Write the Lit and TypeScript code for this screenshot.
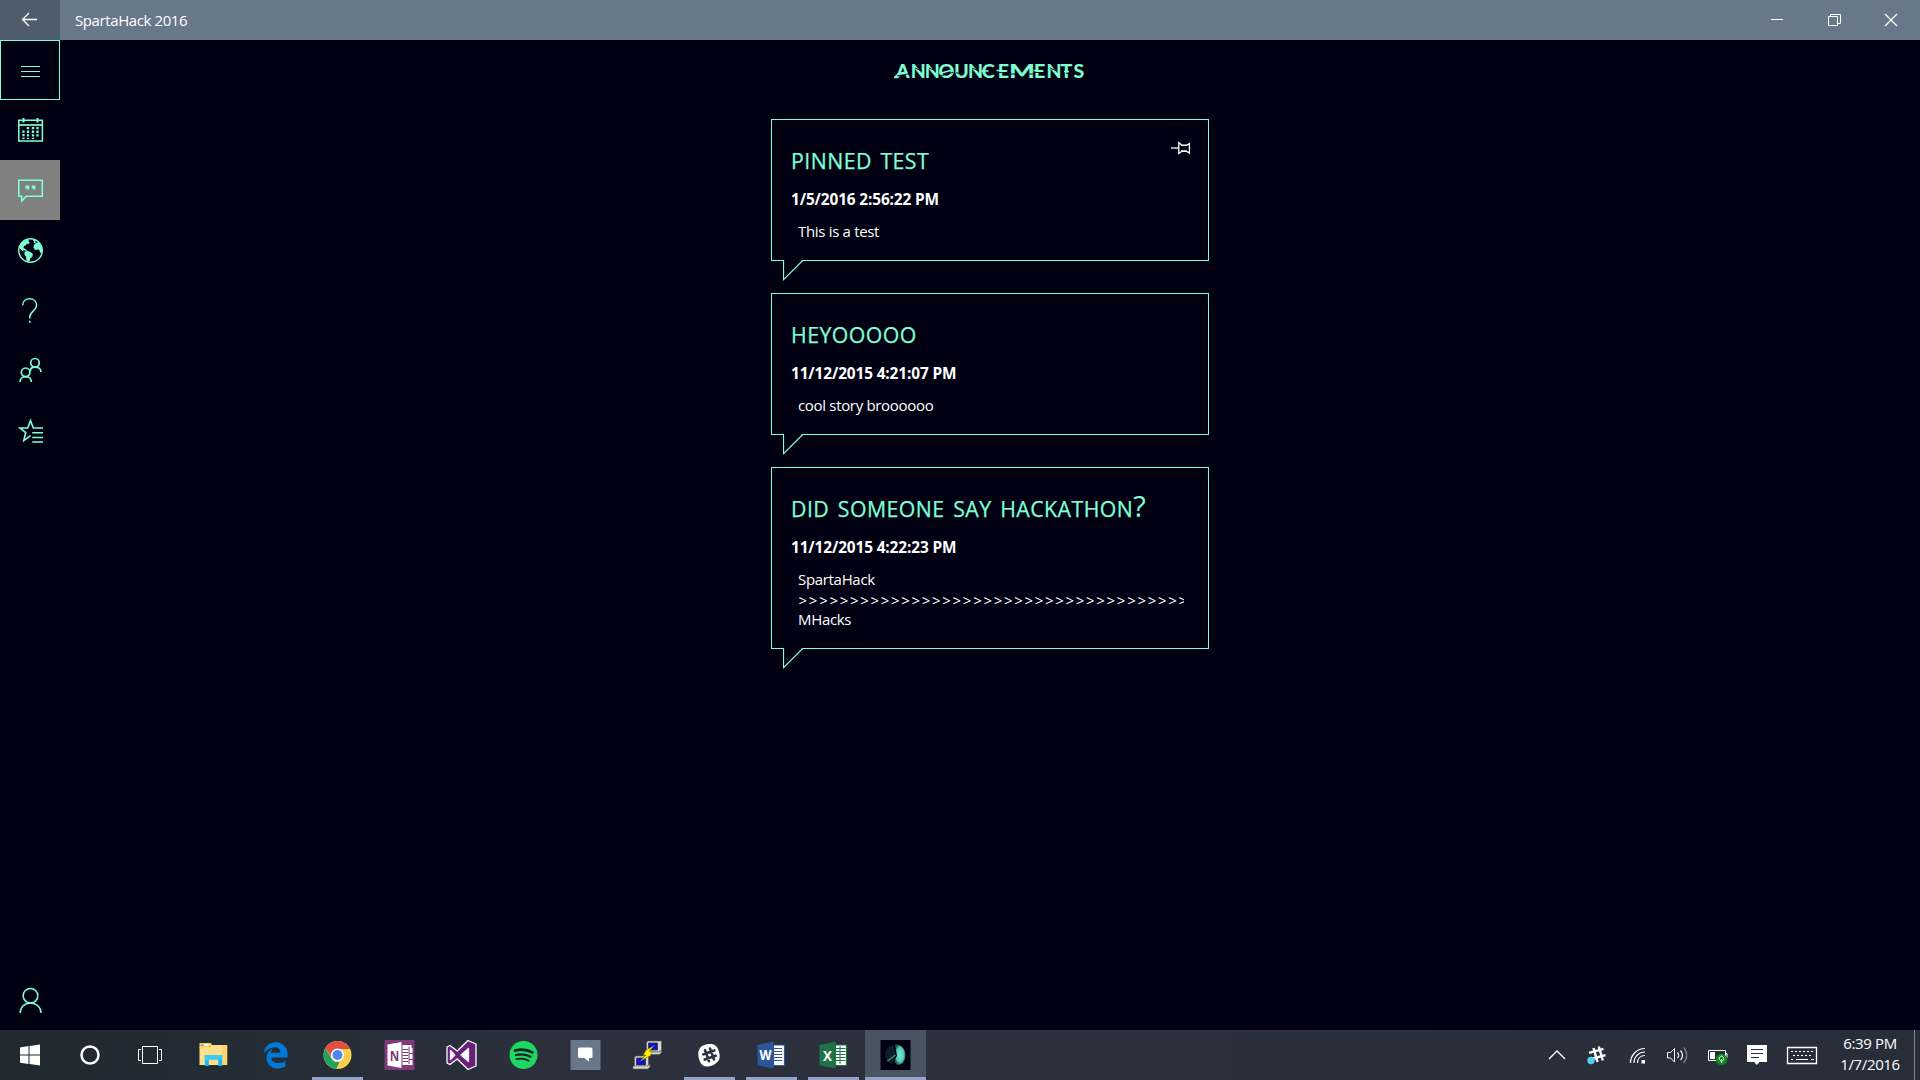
import { LitElement, html, css, svg, nothing } from "lit";
import { customElement, property } from "lit/decorators.js";
import { classMap } from "lit/directives/class-map.js";

const navIcons: Record<string, unknown> = {
  menu: svg`<path d="M21 26.5h19M21 31.5h19M21 36.5h19" stroke-width="1"/>`,
  calendar: svg`<path d="M18.8 20.2h23.6v20.9H18.8z" stroke-width="1.5"/><path d="M19 25h23.5" stroke-width="1.7"/>
    <path d="M23.5 18v4.6M37.5 18v4.6" stroke-width="2"/>
    <path d="M28 27v12M33 27v12M37.5 27v9.5M23.5 30.4v8.6" stroke-width="2.3" stroke-dasharray="2.3 1.3"/>`,
  chat: svg`<path d="M18.8 20.2h23.5v16H26.2L21.8 41v-4.8h-3z" stroke-width="1.6"/>
    <path class="solid" d="M25.4 25.4h3.8v3.2L27.4 31v-2.4h-2zM31.7 25.4h3.8v3.2L33.7 31v-2.4h-2z"/>`,
  globe: svg`<circle cx="30.5" cy="30.5" r="11.8" stroke-width="1.4"/>
    <path class="solid" d="M20 25.5c1-2.4 3.2-4.6 5.8-5.8l3.4.6-.8 1.5 1.4.4-.8 1.5-2.4.3-1 1.4-1.5.7-.6 1.9 2.8 1.4 1 1.8-1.8-.7-2.6-.2-1.6-1.4-2.3-1.4zM24.6 31.6l3.3-.5 3 1.2 2 1.6-.5 2.9-1.8 1.3-.8 2.3-1.8 1.6-1.4-1-.6-4.2-1.6-2.2zM33.8 19.6l2.8 1.3-2 1.2 1.6.6 2-.4c2.4 2.1 4 4.9 4 8.2l-.7 2.6-1.5-.3-.5-2.5-1.6-.7-2.7.4-1.8-2.2.6-3 1.8-1.6-2.3-.5.6-1.2-1.2-1z"/>
    <path d="M20 28l3.4 3.3" stroke-width="1"/>`,
  help: svg`<path d="M22.7 25.2c0-4 3-6.500 7-6.500s6.900 2.600 6.900 6.400c0 5.600-6.800 6.400-6.800 11.800v1.600" stroke-width="1.500"/><path d="M29.800 40.800v2" stroke-width="1.700"/>`,
  people: svg`<g stroke-width="1.7"><circle cx="35" cy="22.800" r="4.300"/><path d="M30.300 31c0-2.400 2-3.800 4.700-3.800 3.400 0 6 1.900 6 4.800"/><circle cx="25.600" cy="32.300" r="4.300"/><path d="M20 42c0-3.200 2.500-5.300 5.700-5.300S31.400 38.800 31.400 42"/></g>`,
  star: svg`<path d="M43 28h-9.700L30.500 20.600 27.700 28h-7.700l5.700 4.500-1.900 8.200 6.800-5" stroke-width="1.600"/><path d="M32.200 32.700H43M32.200 37.500H43M32.200 42H43" stroke-width="1.500"/>`,
  user: svg`<circle cx="30.500" cy="25.700" r="7.300" stroke-width="1.500"/><path d="M20.200 43c0-6 4.500-10 10.300-10s10.500 4 10.500 10" stroke-width="1.500"/>`,
};

const appIcons: Record<string, unknown> = {
  start: svg`<path fill="#fff" d="M10 12.400l8.500-1.300v8.400H10zM19.500 11l10.500-1.400v9.900H19.500zM10 20.500h8.500v8.400L10 27.700zM19.500 20.500H30v9.900L19.500 29z"/>`,
  cortana: svg`<circle cx="20" cy="20" r="8.500" fill="none" stroke="#fff" stroke-width="2.500"/>`,
  taskview: svg`<path fill="none" stroke="#fff" d="M12.500 11.500h15v17h-15zM11 14.500H8.500v11H11M29 14.500h2.500v11H29"/>`,
  explorer: svg`<path fill="#fccb3c" d="M6 8h11.500l1.500 3h-2l-2 2H6z"/><path fill="#fff" d="M10 9h5v2h-5z"/><path fill="#3ec1d3" d="M8 9h2v2H8z"/>
    <path fill="#fee08a" d="M6 12h10l2-2h15.700v20H6z"/><path fill="#f9cf55" d="M29 10h4.700v20H29z" opacity=".6"/><path fill="#21b4ee" d="M11.300 31V20h17.400v11h-4v-6.500h-9.400V31z"/><path fill="#3cc9fb" d="M11.300 20h17.400v4.500l-4 0h-9.400l-4 2z"/>`,
  edge: svg`<g transform="translate(6.700 6.800) scale(.0522 .0530)"><path fill="#0078d7" d="M486.286 243.671c0-44.032-7.754-84.465-28.801-122.405C416.498 47.879 343.912 8.001 258.893 8.001 118.962 7.724 40.617 113.214 26.056 227.679c42.429-61.312 117.073-121.376 220.375-124.966 0 0 109.666 0 99.419 104.957H169.997c6.369-37.386 18.554-58.986 34.339-78.926-75.048 34.893-121.850 96.096-120.742 188.315.83 71.448 50.124 144.836 120.743 171.976 83.357 31.843 192.776 7.200 240.132-21.324V363.307c-80.864 56.494-270.871 60.925-272.255-67.572h314.073z"/></g>`,
  chrome: svg`<circle cx="20" cy="20" r="14" fill="#fdcf4b"/><path fill="#20a261" d="M7.900 13l6.100 10.400A7 7 0 0 0 22 26.700L18.700 33.900A14 14 0 0 1 7.900 13z"/><path fill="#df4f44" d="M7.900 13A14 14 0 0 1 32.600 14H20a6.500 6.500 0 0 0-6.400 7.500z"/><circle cx="20" cy="20" r="6.500" fill="#fff"/><circle cx="20" cy="20" r="5" fill="#4a87f0"/>`,
  onenote: svg`<path fill="#80397b" d="M5 5h30v30H5z"/><path fill="#fff" d="M8 9.500L22 7v26L8 30.500zM23 10h9v3h1v5h-1v1h1v5h-1v1h1v5h-1v0h-9z"/><path stroke="#80397b" fill="none" d="M23 14.500h5.500M23 17.500h5.500M23 20.500h5.500M23 23.500h5.500M23 26.500h5.500M29.500 12v17M30 18.500h3M30 24.500h3"/>
    <text x="15" y="25.500" text-anchor="middle" font-family="Open Sans, sans-serif" font-weight="700" font-size="15" fill="#80397b" textLength="9.500" lengthAdjust="spacingAndGlyphs">N</text>`,
  vs: svg`<path fill="#68217a" stroke="#fff" stroke-width="1.300" stroke-linejoin="round" fill-rule="evenodd" d="M26.500 5.500L34.500 9v22l-8 3.500L15.700 24 8.500 29.500 5.500 28V12l3-1.500 7.200 5.500zM27 13.500L19.500 20l7.500 6.500zM9 15.500v9l4.300-4.500z"/><path fill="#fff" d="M27 14l-7 6 7 6zM9 16v8l4-4z"/>`,
  spotify: svg`<circle cx="20" cy="20" r="14" fill="#1ed760"/><path fill="none" stroke="#17202a" stroke-linecap="round" d="M11.500 15.500c6-1.600 12-1 17.500 1.800" stroke-width="2.600"/><path fill="none" stroke="#17202a" stroke-linecap="round" d="M12.500 20c5-1.300 10-.7 14.500 1.700" stroke-width="2.200"/><path fill="none" stroke="#17202a" stroke-linecap="round" d="M13 24.200c4.300-1 8.500-.5 12.300 1.600" stroke-width="1.800"/>`,
  message: svg`<path fill="#68778a" d="M5 5h30v30H5z"/><path fill="#fff" d="M14 12.500h11.500a1.500 1.500 0 0 1 1.500 1.500v7.500a1.500 1.500 0 0 1-1.500 1.500H23.500v3.800L19 23h-5a1.500 1.500 0 0 1-1.500-1.500V14a1.500 1.500 0 0 1 1.500-1.500z"/>`,
  putty: svg`<path fill="#d8d5cb" stroke="#555" stroke-width=".6" d="M20 6h14v9l-2 2H19V8z"/><path fill="#0a10d8" stroke="#333" stroke-width=".8" d="M21 8h9v7h-9z"/><path fill="#d8d5cb" stroke="#555" stroke-width=".6" d="M17.500 17H32l2-1.500v2L32 19.500H17.500z"/>
    <path fill="#d8d5cb" stroke="#555" stroke-width=".6" d="M8 21h13v9l-2 2H7V23z"/><path fill="#0a10d8" stroke="#333" stroke-width=".8" d="M9 23h9v7H9z"/><path fill="#d8d5cb" stroke="#555" stroke-width=".6" d="M5.500 31H20l2.500-1.500v2.500L20 34H5.500z"/>
    <path fill="#ffef00" stroke="#6b6400" stroke-width=".5" d="M27 10.500l-8.500 4.500-3 5.500 3-.5L12 26.500l11-6 2-4.500-3.500.5z"/>`,
  slack: svg`<path fill="#fff" d="M14 9.500C22 7 27 8 29.200 14S31.500 25 25 28.500 13 31.500 10.500 25 8.500 12 14 9.500z" transform="translate(-.3 .9)"/><path stroke="#2b3240" stroke-width="2.600" fill="none" stroke-linecap="round" d="M15.500 15.200l4 11M20.500 13.500l4 11M13.800 19.300l11-3.900M15.200 24.600l11-3.900"/>`,
  word: svg`<path fill="#2b579a" d="M6 10L22 6.500v27L6 30.300z"/><path fill="#fff" stroke="#2b579a" stroke-width="1.200" d="M22 10h11v20.500H22z"/><path stroke="#2b579a" fill="none" d="M22 13.500h8.500M22 16.500h8.500M22 19.500h8.500M22 22.500h8.500M22 25.500h8.500"/>
    <text x="14" y="25" text-anchor="middle" font-family="Open Sans, sans-serif" font-weight="700" font-size="14" fill="#fff" textLength="12" lengthAdjust="spacingAndGlyphs">W</text>`,
  excel: svg`<path fill="#1f7244" d="M6 10L22 6.500v27L6 30.300z"/><path fill="#fff" stroke="#1f7244" stroke-width="1.200" d="M22 10h11v20.500H22z"/><path stroke="#1f7244" fill="none" d="M22 13.500h10M22 16.500h10M22 19.500h10M22 22.500h10M22 25.500h10M26.500 11v18"/>
    <text x="14" y="25.500" text-anchor="middle" font-family="Open Sans, sans-serif" font-weight="700" font-size="15" fill="#fff" textLength="9" lengthAdjust="spacingAndGlyphs">X</text>`,
  sparta: svg`<defs><radialGradient id="glow"><stop offset="0" stop-color="#74eed0"/><stop offset=".7" stop-color="#55c9b2"/><stop offset="1" stop-color="#225b5e"/></radialGradient></defs><path fill="#00000f" d="M5 5h30v30H5z"/><path fill="#173b42" d="M18 10c-5 1-8 4-8 9.500S12 28 17 29l3-9z" opacity=".55"/><path fill="url(#glow)" d="M19.500 9.500c6-.5 10.500 4 10.500 10.500S26.500 30 22 30l-3-3 .5-3 2-3z"/><path stroke="#3f9c8e" stroke-width="1.100" fill="none" d="M12 26l8-6"/>`,
};

@customElement("nav-rail")
class NavRail extends LitElement {
  static styles = css`
    :host { display: flex; flex-direction: column; width: 60px; flex: none; }
    .item { box-sizing: border-box; width: 60px; height: 60px; flex: none; }
    .item.focus { box-shadow: inset 0 0 0 1px #7fffd4; }
    .item.active { background: #808080; }
    .space { flex: 1; }
    svg { display: block; fill: none; stroke: #7fffd4; }
    .solid { fill: #7fffd4; stroke: none; }
  `;
  private item(name: string) {
    return html`<div class=${classMap({ item: true, focus: name === "menu", active: name === "chat" })}>
      <svg width="60" height="60" viewBox="0 0 60 60">${navIcons[name]}</svg>
    </div>`;
  }
  render() {
    return html`${["menu", "calendar", "chat", "globe", "help", "people", "star"].map((n) => this.item(n))}
      <div class="space"></div>${this.item("user")}`;
  }
}

interface Announcement { title: string; mark?: string; time: string; lines: string[]; pinned?: boolean; }

@customElement("announcement-card")
class AnnouncementCard extends LitElement {
  @property({ attribute: false }) data!: Announcement;
  static styles = css`
    :host { display: block; }
    .card { position: relative; box-sizing: border-box; width: 438px; border: 1px solid #7fffd4; padding: 26px 24px 19px 19px; }
    .title { color: #7fffd4; font-size: 21.3px; line-height: 30px; height: 30px; white-space: pre; letter-spacing: 0.45px; word-spacing: 2.6px; -webkit-text-stroke: 0.25px #7fffd4; }
    .mark { font-size: 29px; line-height: 1px; -webkit-text-stroke: 0; }
    .time { margin-top: 14px; color: #fff; font-weight: 700; font-size: 15.4px; line-height: 20px; letter-spacing: -0.13px; }
    .body { margin: 11px 0 0 7px; color: #fff; font-size: 15px; line-height: 20px; letter-spacing: -0.32px; }
    .line { height: 20px; overflow: hidden; white-space: nowrap; }
    .arrows { box-sizing: border-box; letter-spacing: 1.69px; padding: 1px 0 0 0.6px; }
    .tail { position: absolute; left: 11px; top: 100%; }
    .pin { position: absolute; right: 17px; top: 21px; }
  `;
  render() {
    const d = this.data;
    return html`<div class="card">
      <div class="title">${d.title}${d.mark ? html`<span class="mark">${d.mark}</span>` : nothing}</div>
      <div class="time">${d.time}</div>
      <div class="body">${d.lines.map((l) => html`<div class=${classMap({ line: true, arrows: l.startsWith(">") })}>${l}</div>`)}</div>
      ${d.pinned ? html`<svg class="pin" width="20" height="14" viewBox="0 0 20 14" fill="none" stroke="#fff">
        <path d="M0 7h7.500" stroke-width="1.300"/><path d="M7.800 1.600v10.800l2.800-2h5.200l2.600 1.600V2.600l-2.600 1.500h-5.200zM10 4.400h6M10 10h6" stroke-width="1.300"/></svg>` : nothing}
      <svg class="tail" width="22" height="22" viewBox="0 0 22 22">
        <path d="M.5-1v21L20-1z" fill="#000012"/><path d="M.5 0v19.700L19.900.3" fill="none" stroke="#7fffd4" stroke-width="1.200"/></svg>
    </div>`;
  }
}

@customElement("task-bar")
class TaskBar extends LitElement {
  static styles = css`
    :host { display: flex; height: 50px; background: linear-gradient(90deg, #202830 0, #252d37 16%, #2b303c 28%, #2b303c 60%, #272e39 100%); color: #fff; }
    .sys { width: 60px; }
    .apps { display: flex; margin-left: 3px; flex: 1; }
    .app { width: 61px; margin-right: 1px; display: flex; flex-direction: column; align-items: center; }
    .current { background: #485462; }
    .app svg, .sys svg { display: block; margin: 5px auto 2px; flex: none; }
    .app svg { transform: translateX(-0.5px); }
    .bar { width: 51px; height: 3px; background: #93a4c8; }
    .current .bar { width: 61px; }
    .tray { display: grid; grid-template-columns: 40px 40px 42px 35px 46px 34px 56px 80px 10px; }
    .tray svg { display: block; width: 100%; height: 50px; overflow: visible; }
    .clock { padding-top: 3px; font-size: 15px; line-height: 21px; text-align: center; letter-spacing: -0.35px; }
    .peek { width: 1px; margin-left: 4px; background: #7f858d; }
  `;
  private app(name: string) {
    const open = ["chrome", "slack", "word", "excel", "sparta"].includes(name);
    return html`<div class=${classMap({ app: true, current: name === "sparta" })}>
      <svg width="40" height="40" viewBox="0 0 40 40">${appIcons[name]}</svg>${open ? html`<div class="bar"></div>` : nothing}</div>`;
  }
  private glyph(w: number, content: unknown) {
    return html`<svg viewBox="0 0 ${w} 50" fill="none" stroke="#fff">${content}</svg>`;
  }
  render() {
    return html`
      ${["start", "cortana", "taskview"].map((n) => html`<div class="sys"><svg width="40" height="40" viewBox="0 0 40 40">${appIcons[n]}</svg></div>`)}
      <div class="apps">${["explorer", "edge", "chrome", "onenote", "vs", "spotify", "message", "putty", "slack", "word", "excel", "sparta"].map((n) => this.app(n))}</div>
      <div class="tray">
        ${this.glyph(40, svg`<path d="M12 29l8-8 8 8" stroke-width="1.300"/>`)}
        ${this.glyph(40, svg`<path d="M16.500 18l4 14M21.800 16.500l4 14M12 22.800l14.500-3.900M14 29l14.500-3.900" stroke-width="2.400"/><circle cx="14" cy="30.500" r="3.700" fill="#4fd0f0" stroke="none"/>`)}
        ${this.glyph(42, svg`<path d="M13.500 33c0-8 6.500-14.500 14.500-14.500M17 33c0-6.500 4.800-11 11-11M20.500 33c0-4.500 3-7.500 7.500-7.500M13.500 33v-3" stroke-width="1.200"/><path d="M24.500 30h3.500v3.500h-3.500z" fill="#fff" stroke="none"/>`)}
        ${this.glyph(35, svg`<path d="M8.500 22.500h3l4-4v13.500l-4-4h-3z"/><path d="M18.500 22.500c1.500 1.500 1.500 4 0 5.500M21.500 20.500c2.700 2.700 2.700 7 0 9.500" stroke-width="1.200"/><path d="M24.500 17.500c4.300 4.300 4.300 11 0 15.500" stroke="#7c828b" stroke-width="1.200"/>`)}
        ${this.glyph(46, svg`<path d="M14.500 20.500h17v10h-17zM32 23.500h1v4"/><path d="M16 22h5v7h-5z" fill="#fff" stroke="none"/><circle cx="27.500" cy="29.500" r="5.700" fill="#0f8a1c" stroke="none"/><path d="M27.500 33v-4M27.500 26c-3 1-3 4.500 0 5 3-.5 3-4 0-5z"/>`)}
        ${this.glyph(34, svg`<path d="M7 15h20v17h-7.500l-2.700 3-2.600-3H7z" fill="#fff" stroke="none"/><path d="M11 19.500h12M11 23.500h12M11 27.500h8" stroke="#2a303b"/>`)}
        ${this.glyph(56, svg`<path d="M13.500 17.500h29v16h-29z" stroke-width="1.300"/><path d="M17 21.500h22M19 25.500h20" stroke-dasharray="2 2"/><path d="M17 29.500h2M22 29.500h12M37 29.500h3"/>`)}
        <div class="clock"><div>6:39 PM</div><div>1/7/2016</div></div>
        <div class="peek"></div>
      </div>`;
  }
}

const announcements: Announcement[] = [
  { title: "PINNED TEST", time: "1/5/2016 2:56:22 PM", lines: ["This is a test"], pinned: true },
  { title: "HEYOOOOO", time: "11/12/2015 4:21:07 PM", lines: ["cool story broooooo"] },
  { title: "DID SOMEONE SAY HACKATHON", mark: "?", time: "11/12/2015 4:22:23 PM", lines: ["SpartaHack", ">".repeat(38), "MHacks"] },
];

@customElement("app-root")
class AppRoot extends LitElement {
  static styles = css`
    :host { display: flex; flex-direction: column; width: 1920px; height: 1080px; overflow: hidden; background: #000012; font-family: "Open Sans", "Noto Sans", sans-serif; }
    .titlebar { display: flex; height: 40px; background: #68778a; color: #fff; flex: none; }
    .back { width: 60px; background: #4e5c6b; }
    .name { flex: 1; padding-left: 15px; font-size: 15px; line-height: 40px; letter-spacing: -0.4px; }
    svg { display: block; fill: none; stroke: #fff; }
    .main { display: flex; flex: 1; min-height: 0; }
    .content { flex: 1; display: flex; flex-direction: column; align-items: center; }
    .heading { margin-top: 20px; height: 24px; }
    .heading text { fill: #7fffd4; stroke: #7fffd4; stroke-width: 0.2; font: 700 19.500px Lato, sans-serif; }
    .accent { stroke: #7fffd4; stroke-width: 1.700; }
    .cut { stroke: #000012; stroke-width: 0.900; }
    .list { display: flex; flex-direction: column; gap: 32px; margin-top: 35px; }
  `;
  render() {
    return html`
      <div class="titlebar">
        <div class="back"><svg width="60" height="40" viewBox="0 0 60 40"><path d="M37 19.500H22.700M29 13l-6.500 6.500L29 26" stroke-width="1.300"/></svg></div>
        <div class="name">SpartaHack 2016</div>
        <svg width="171" height="40" viewBox="0 0 171 40"><path d="M22 19.500h12M79.500 16.500h9v9h-9zM81.500 16v-1.500h10v9H89"/><path d="M136 14l12 12M148 14l-12 12" stroke-width="1.300"/></svg>
      </div>
      <div class="main">
        <nav-rail></nav-rail>
        <div class="content">
          <svg class="heading" width="200" height="24" viewBox="890 60 200 24">
            <text y="78"><tspan x="896 910.700 924.800 938.500 954.300 968 981.800 997.700">ANNOUNCE</tspan><tspan x="1009" textLength="26" lengthAdjust="spacingAndGlyphs">M</tspan><tspan x="1034 1046.500 1060.500 1073.500">ENTS</tspan></text>
            <path class="accent" d="M894 77.400h4M895 77l4.500-3.500 6-1.500M939.500 73.500l13-3.500M981.500 71h7M996.500 70.500h5M1033.500 70.500h5M1064 71.500h5"/>
            <path class="cut" d="M897 76l12-2.200M940 76l13-3.700M915 68l7 3M929 68l7 3M972 68l7 3M1050 68l7 3M1010 74h6M1028 74h6M997 72.500h5M1034 72.500h5M1066 73.300h6M956 73h6"/>
          </svg>
          <div class="list">${announcements.map((a) => html`<announcement-card .data=${a}></announcement-card>`)}</div>
        </div>
      </div>
      <task-bar></task-bar>`;
  }
}
